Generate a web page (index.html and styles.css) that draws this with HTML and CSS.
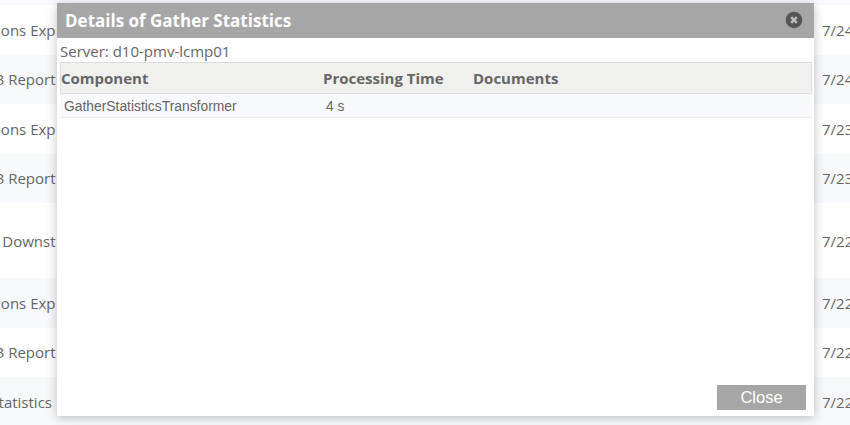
FILE: index.html
```html
<!DOCTYPE html>
<html>
<head>
  <title>Job History</title>
  <link rel="stylesheet" href="styles.css">
</head>
<body>
  <div class="history">
    <div class="row tinted first"><div class="name"></div><div class="date"></div></div>
    <div class="row"><div class="name">Transformations Exp</div><div class="date">7/24/2023</div></div>
    <div class="row tinted"><div class="name">Daily DB3 Report</div><div class="date">7/24/2023</div></div>
    <div class="row"><div class="name">Transformations Exp</div><div class="date">7/23/2023</div></div>
    <div class="row tinted"><div class="name">Daily DB3 Report</div><div class="date">7/23/2023</div></div>
    <div class="row tall"><div class="name">Load Downst</div><div class="date">7/22/2023</div></div>
    <div class="row tinted"><div class="name">Transformations Exp</div><div class="date">7/22/2023</div></div>
    <div class="row"><div class="name">Daily DB3 Report</div><div class="date">7/22/2023</div></div>
    <div class="row tinted"><div class="name stats">Gather Statistics</div><div class="date">7/22/2023</div></div>
  </div>

  <div class="dialog">
    <div class="dialog-title">
      <span>Details of Gather Statistics</span>
      <svg class="close-icon" width="18" height="18" viewBox="0 0 18 18">
        <circle cx="9" cy="9" r="8.3" fill="#555"/>
        <path d="M6.2 6.2l5.6 5.6M11.8 6.2l-5.6 5.6" stroke="#bdbdbd" stroke-width="2.6" fill="none"/>
      </svg>
    </div>
    <div class="dialog-body">
      <div class="server">Server: d10-pmv-lcmp01</div>
      <div class="grid-head">
        <div class="col-component">Component</div>
        <div class="col-time">Processing Time</div>
        <div>Documents</div>
      </div>
      <div class="grid-row">
        <div class="col-component">GatherStatisticsTransformer</div>
        <div class="col-time">4 s</div>
        <div></div>
      </div>
    </div>
    <div class="dialog-footer">
      <button type="button" class="close-btn">Close</button>
    </div>
  </div>
</body>
</html>
```

FILE: styles.css
```css
html, body {
  margin: 0;
  height: 425px;
  overflow: hidden;
  background-color: white;
  font-family: "Open Sans", sans-serif;
  color: #666;
}

.row {
  display: flex;
  align-items: center;
  height: 49.5px;
  font-size: 15px;
  white-space: nowrap;
}

.row.first {
  height: 5px;
}

.row.tall {
  height: 75px;
}

.tinted {
  background-color: #f8f9fd;
}

.name {
  display: flex;
  justify-content: flex-end;
  width: 55.5px;
  margin-right: 766.5px;
  overflow: hidden;
  flex-shrink: 0;
}

.name.stats {
  width: 52px;
  margin-right: 770px;
}

.dialog {
  position: absolute;
  left: 57px;
  top: 3px;
  width: 757px;
  height: 413px;
  display: flex;
  flex-direction: column;
  background-color: white;
  box-shadow: 0 2px 10px rgba(0, 0, 0, 0.25);
}

.dialog-title {
  display: flex;
  align-items: center;
  justify-content: space-between;
  height: 35px;
  padding: 0 11px 1px 8px;
  box-sizing: border-box;
  background-color: #a6a6a6;
  color: white;
  font-size: 17px;
  font-weight: 700;
}

.dialog-body {
  flex: 1;
  padding: 0 2px 0 3px;
}

.server {
  height: 24px;
  padding-top: 2px;
  box-sizing: border-box;
  line-height: 22px;
  font-size: 15px;
}

.grid-head,
.grid-row {
  display: grid;
  grid-template-columns: 262px 150px 1fr;
}

.grid-head {
  height: 32px;
  box-sizing: border-box;
  align-items: center;
  background-color: #f0f0ee;
  border: 1px solid #ddd;
  font-size: 15px;
  font-weight: 700;
}

.grid-row {
  height: 24px;
  box-sizing: border-box;
  align-items: center;
  padding-left: 4px;
  background-color: #f8f9fd;
  border-bottom: 1px solid #eaeaea;
  font-family: "Liberation Sans", Arial, sans-serif;
  font-size: 13.85px;
}

.dialog-footer {
  display: flex;
  justify-content: flex-end;
  padding: 0 8px 6px 0;
}

.close-btn {
  width: 89px;
  height: 25px;
  padding: 0;
  background-color: #a6a6a6;
  border: none;
  color: white;
  font-family: "Liberation Sans", Arial, sans-serif;
  font-size: 16.5px;
}
```
